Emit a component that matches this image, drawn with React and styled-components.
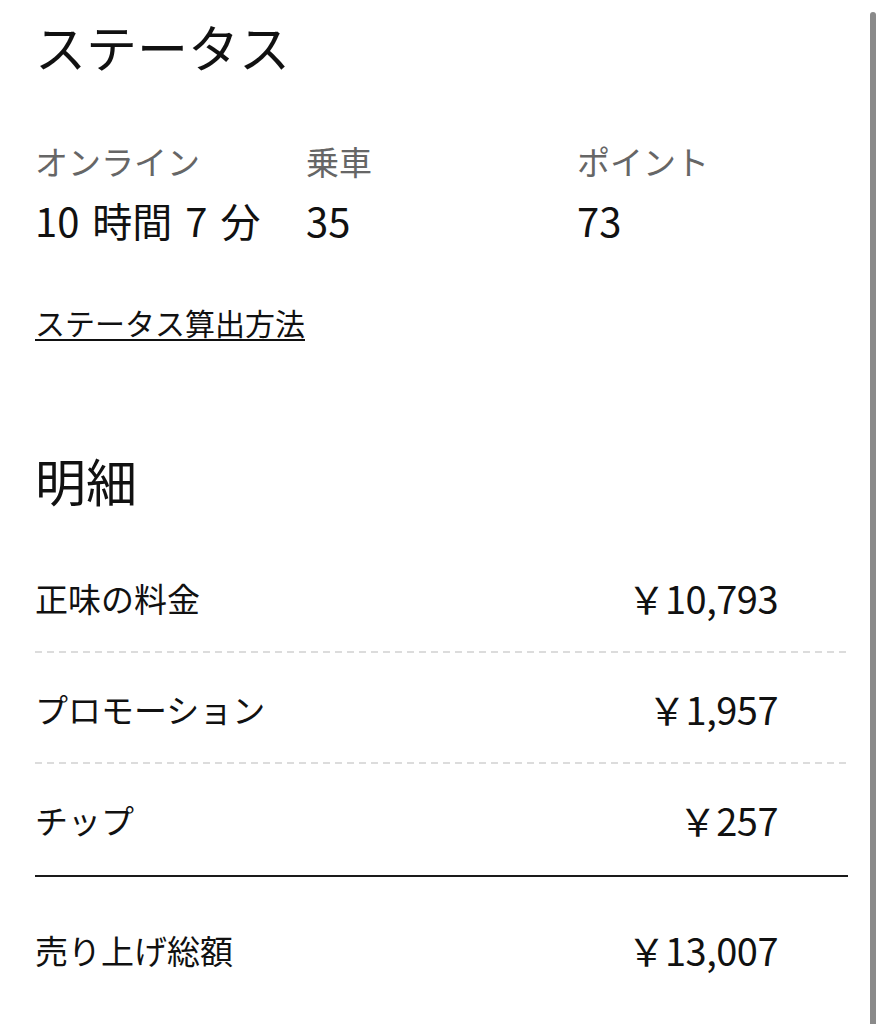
import React from 'react'
import styled, { createGlobalStyle } from 'styled-components'

const GlobalStyle = createGlobalStyle`
  html, body {
    margin: 0;
    padding: 0;
    background: #fff;
  }
  body {
    font-family: "Noto Sans CJK JP", "Noto Sans", sans-serif;
    color: #111;
  }
`

const Page = styled.div`
  display: flex;
  min-height: 1024px;
`

const Content = styled.main`
  width: 813px;
  padding-left: 35px;
`

// 右端のスクロールバー
const ScrollBar = styled.div`
  width: 6px;
  margin: 12px 0 0 22px;
  background: #8a8a8a;
  border-radius: 3px 3px 0 0;
`

const Heading = styled.h1`
  margin: 0;
  padding-top: ${props => props.top || 0}px;
  font-size: 51px;
  font-weight: 400;
  line-height: 60px;
`

const Stats = styled.div`
  display: grid;
  grid-template-columns: 271px 271px 271px;
  margin-top: 65px;
`

const Stat = styled.div`
  display: flex;
  flex-direction: column;
`

const StatLabel = styled.span`
  font-size: 33px;
  line-height: 40px;
  color: #666;
`

const StatValue = styled.span`
  margin-top: 17px;
  font-size: 40px;
  line-height: 44px;
  word-spacing: 4px;
  color: #111;
`

const HowLink = styled.a`
  display: inline-block;
  margin-top: 60px;
  font-size: 30px;
  line-height: 40px;
  color: #111;
  text-decoration: underline;
  text-decoration-thickness: 2px;
  text-underline-offset: 4px;
`

const Rows = styled.div`
  margin-top: 32px;
`

const Row = styled.div`
  display: flex;
  justify-content: space-between;
  align-items: center;
  height: ${props => props.total ? 146 : 111}px;
  padding-right: 70px;
  ${props => props.dashed && `
    background: repeating-linear-gradient(to right, #dcdcdc 0 7px, transparent 7px 12px) bottom / 100% 2px no-repeat;
  `}
  ${props => props.solid && `
    border-bottom: 2px solid #1a1a1a;
  `}
`

const RowLabel = styled.span`
  font-size: 33px;
  line-height: 40px;
`

const Amount = styled.span`
  font-size: 38px;
  line-height: 44px;
  letter-spacing: -0.5px;
`

const stats = [
  { label: 'オンライン', value: '10 時間 7 分' },
  { label: '乗車', value: '35' },
  { label: 'ポイント', value: '73' },
]

const breakdown = [
  { label: '正味の料金', amount: '￥10,793' },
  { label: 'プロモーション', amount: '￥1,957' },
  { label: 'チップ', amount: '￥257' },
]

export default function App() {
  return (
    <>
      <GlobalStyle />
      <Page>
        <Content>
          <Heading top={16}>ステータス</Heading>
          <Stats>
            {stats.map(s => (
              <Stat key={s.label}>
                <StatLabel>{s.label}</StatLabel>
                <StatValue>{s.value}</StatValue>
              </Stat>
            ))}
          </Stats>
          <HowLink href="#">ステータス算出方法</HowLink>

          <Heading top={108}>明細</Heading>
          <Rows>
            {breakdown.map((r, i) => (
              <Row key={r.label} dashed={i < breakdown.length - 1} solid={i === breakdown.length - 1}>
                <RowLabel>{r.label}</RowLabel>
                <Amount>{r.amount}</Amount>
              </Row>
            ))}
            <Row total>
              <RowLabel>売り上げ総額</RowLabel>
              <Amount>￥13,007</Amount>
            </Row>
          </Rows>
        </Content>
        <ScrollBar />
      </Page>
    </>
  )
}
